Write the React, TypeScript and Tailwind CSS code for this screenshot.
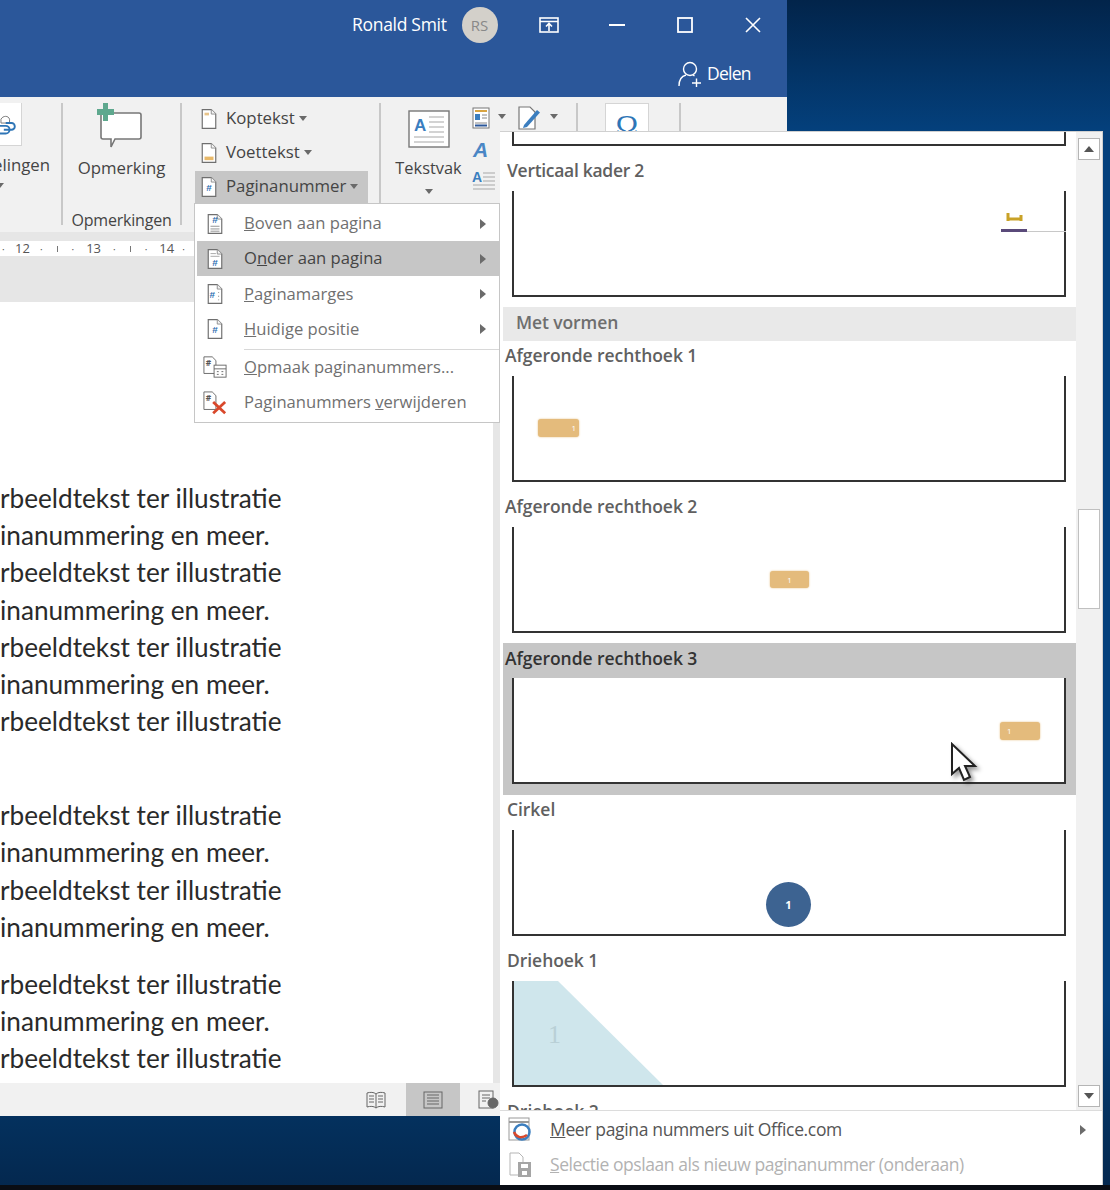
import React from "react";

const ui = "font-['Open_Sans','Noto_Sans',sans-serif]";

function PageIcon({ kind }: { kind: "top" | "bottom" | "side" | "current" | "head" | "foot" | "num" }) {
  return (
    <svg width="18" height="22" viewBox="0 0 20 24" className="shrink-0">
      <path d="M2.5 1.5h10l5 5v16h-15z" fill="#fff" stroke="#6f6f6f" strokeWidth="1.3" />
      <path d="M12.5 1.5v5h5" fill="#f3f3f3" stroke="#8a8a8a" strokeWidth="1" />
      {kind === "head" && <path d="M5 5h5v3H5z" fill="#e8c48a" />}
      {kind === "foot" && <path d="M5 16h10v4H5z" fill="#e8b96a" />}
      {(kind === "top" || kind === "bottom" || kind === "side" || kind === "current" || kind === "num") && (
        <text
          x={kind === "side" ? 7 : 10}
          y={kind === "top" ? 11 : kind === "bottom" ? 20 : 16}
          textAnchor="middle"
          fontSize="11"
          fontWeight="700"
          fill="#2b6cb0"
          fontFamily="Liberation Sans, sans-serif"
        >
          #
        </text>
      )}
      {kind === "top" && <path d="M5 14.500h10M5 17.500h10M5 20h10" stroke="#8a8a8a" strokeWidth="1" />}
      {kind === "bottom" && <path d="M5 6h6M5 9h10" stroke="#a0a0a0" strokeWidth="1" />}
      {kind === "side" && <path d="M14 10v1M14 14v1M14 18v1" stroke="#8a8a8a" strokeWidth="1.2" />}
    </svg>
  );
}

function Caret({ className = "" }: { className?: string }) {
  return (
    <svg width="8" height="5" viewBox="0 0 8 5" className={className}>
      <path d="M0 0h8L4 5z" fill="#6a6a6a" />
    </svg>
  );
}

function ArrowRight() {
  return (
    <svg width="6" height="10" viewBox="0 0 6 10" className="shrink-0">
      <path d="M0 0l6 5-6 5z" fill="#6b6b6b" />
    </svg>
  );
}

function Sep({ h = "h-[122px]" }: { h?: string }) {
  return <div className={`w-[2px] bg-[#c8c8c8] shrink-0 ${h}`} />;
}

function SmallRow({ kind, label, active }: { kind: "head" | "foot" | "num"; label: string; active?: boolean }) {
  return (
    <div className={`flex items-center h-[34px] w-[173px] pl-[5px] pb-[3px] ${active ? "bg-[#c6c6c6]" : ""}`}>
      <PageIcon kind={kind} />
      <span className="ml-[8px] text-[16.8px] text-[#444] leading-none">{label}</span>
      <Caret className="ml-[4px]" />
    </div>
  );
}

function MenuRow({ icon, children, hl, arrow = true }: { icon: React.ReactNode; children: React.ReactNode; hl?: boolean; arrow?: boolean }) {
  return (
    <div className={`flex items-center h-[35.2px] ${hl ? "bg-[#c6c6c6] text-[#444]" : "text-[#707070]"}`}>
      <div className="w-[47px] flex justify-center shrink-0 pr-[11px]">{icon}</div>
      <span className="text-[16.6px] leading-none whitespace-nowrap">{children}</span>
      {arrow && (
        <div className="ml-auto pr-[13px]">
          <ArrowRight />
        </div>
      )}
    </div>
  );
}

function Frame({ children }: { children?: React.ReactNode }) {
  return (
    <div className="relative ml-[9px] w-[554px] h-[106px] border-l-2 border-r-2 border-b-2 border-[#333] bg-white">
      {children}
    </div>
  );
}

const labelCls = "font-semibold leading-none text-[17.5px] whitespace-nowrap";

function Item({ label, hl, children, pl = "pl-[2px]" }: { label: string; hl?: boolean; children?: React.ReactNode; pl?: string }) {
  return (
    <div className={`h-[151.2px] w-[573px] shrink-0 ${hl ? "bg-[#c6c6c6]" : ""}`}>
      <div className={`h-[35px] flex items-center pb-[5px] tracking-[-0.05px] ${pl} ${labelCls} ${hl ? "text-[#333]" : "text-[#606060]"}`}>
        {label}
      </div>
      <Frame>{children}</Frame>
    </div>
  );
}

const docLines = ["rbeeldtekst ter illustratie", "inanummering en meer."];

function DocLine({ i }: { i: number }) {
  return <div className="h-[37.2px] flex items-center text-[26.2px] text-[#2a2a2a] whitespace-nowrap font-['Lato',sans-serif] leading-none">{docLines[i % 2]}</div>;
}

export default function App() {
  return (
    <div className={`relative w-[1110px] h-[1190px] overflow-hidden bg-[linear-gradient(180deg,#02244a_0px,#04407c_131px,#04407c_1000px,#04315e_1116px,#04284f_1185px)] ${ui}`}>
      <div className="absolute left-0 bottom-0 w-full h-[5px] bg-[#0a0d14]" />
      {/* Word window */}
      <div className="absolute left-0 top-0 w-[787px] h-[1116px] flex flex-col bg-white">
        {/* title */}
        <div className="h-[97px] bg-[#2b579a] shrink-0 flex flex-col text-white">
          <div className="h-[50px] flex items-center">
            <span className="ml-[352px] text-[17.5px] tracking-[-0.3px] leading-none">Ronald Smit</span>
            <div className="ml-[15px] w-[36px] h-[36px] rounded-full bg-[#d3d0ca] text-[#888] flex items-center justify-center text-[15px]">RS</div>
            <svg width="20" height="16" viewBox="0 0 20 16" className="ml-[41px]" fill="none" stroke="#fff" strokeWidth="1.6">
              <rect x="1" y="1" width="18" height="14" />
              <path d="M1 4.500h18M10 14V7M7 9.500l3-3 3 3" />
            </svg>
            <svg width="16" height="2" viewBox="0 0 16 2" className="ml-[50px]">
              <rect width="16" height="2" fill="#fff" />
            </svg>
            <svg width="16" height="16" viewBox="0 0 16 16" className="ml-[52px]" fill="none" stroke="#fff" strokeWidth="1.8">
              <rect x="1" y="1" width="14" height="14" />
            </svg>
            <svg width="16" height="16" viewBox="0 0 16 16" className="ml-[52px]" fill="none" stroke="#fff" strokeWidth="1.6">
              <path d="M1 1l14 14M15 1L1 15" />
            </svg>
          </div>
          <div className="h-[47px] flex items-center">
            <svg width="24" height="26" viewBox="0 0 24 26" className="ml-[678px]" fill="none" stroke="#fff" strokeWidth="1.4">
              <circle cx="12" cy="8" r="6.500" />
              <path d="M1 25c0-6 3-10 7-11M15 14l1.500 1M14 22h9M18.500 17.500v9" />
            </svg>
            <span className="ml-[5px] text-[17.5px] tracking-[-0.75px] leading-none">Delen</span>
          </div>
        </div>
        {/* ribbon */}
        <div className="h-[135px] bg-[#f1f1f1] shrink-0 flex pt-[6px] items-start text-[#444]">
          <div className="w-[61px] shrink-0 flex flex-col">
            <div className="w-[22px] h-[43px] bg-white border-r border-b border-[#d5d5d5] flex items-center overflow-hidden">
              <svg width="22" height="28" viewBox="0 0 22 28" fill="none">
                <path d="M1 9c2-4 8-4 9 0v4H1z" stroke="#777" strokeWidth="1" />
                <path d="M-2 18h8a4 4 0 0 1 0 8h-6M4 22h8a3.500 3.500 0 0 0 0-7H6" stroke="#2e75b6" strokeWidth="2" transform="translate(0 -2)" />
              </svg>
            </div>
            <div className="text-[16.8px] leading-none mt-[11px] whitespace-nowrap w-[50px] flex justify-end">elingen</div>
            <Caret className="mt-[9px] -ml-[4px]" />
          </div>
          <Sep />
          <div className="w-[117px] shrink-0 flex flex-col items-center">
            <svg width="48" height="46" viewBox="0 0 48 46" className="-ml-[2px] shrink-0" fill="none">
              <path d="M4 10h38a2 2 0 0 1 2 2v22a2 2 0 0 1-2 2H18l-4 8v-8H6a2 2 0 0 1-2-2z" fill="#fff" stroke="#777" strokeWidth="1.6" />
              <path d="M6 0h5v6h6v6h-6v6H6v-6H0V6h6z" fill="#5ea88e" />
            </svg>
            <div className="text-[16.8px] leading-none mt-[11px]">Opmerking</div>
            <div className="text-[16px] leading-none mt-[35px] whitespace-nowrap tracking-[-0.2px]">Opmerkingen</div>
          </div>
          <Sep />
          <div className="w-[197px] shrink-0 pl-[13px] flex flex-col">
            <SmallRow kind="head" label="Koptekst" />
            <SmallRow kind="foot" label="Voettekst" />
            <SmallRow kind="num" label="Paginanummer" active />
          </div>
          <Sep h="h-[100px]" />
          <div className="w-[91px] shrink-0 flex flex-col items-center pt-[7px] pl-[4px]">
            <svg width="42" height="38" viewBox="0 0 42 38" fill="none">
              <rect x="1" y="1" width="40" height="36" fill="#fff" stroke="#777" strokeWidth="1.4" />
              <text x="6" y="21" fontSize="17" fontWeight="700" fill="#3b7ebf" fontFamily="Liberation Sans, sans-serif">A</text>
              <path d="M21 7h15M21 12h15M21 17h15M21 22h15M6 27h30M6 32h30" stroke="#a8a8a8" strokeWidth="1.2" />
            </svg>
            <div className="text-[16.4px] leading-none mt-[12px]">Tekstvak</div>
            <Caret className="mt-[13px]" />
          </div>
          <div className="w-[30px] shrink-0 flex flex-col items-start pt-[4px] gap-[9px]">
            <svg width="18" height="22" viewBox="0 0 18 22" fill="none">
              <rect x="1" y="1" width="16" height="20" fill="#fff" stroke="#777" />
              <path d="M3 4h12" stroke="#d9a441" strokeWidth="2" />
              <rect x="3" y="7" width="5" height="6" fill="#3b7ebf" />
              <path d="M10 8h5M10 11h5M3 16h12" stroke="#888" />
              <path d="M3 18.500h12" stroke="#2b579a" strokeWidth="2" />
            </svg>
            <svg width="18" height="22" viewBox="0 0 18 22">
              <text x="1" y="19" fontSize="21" fontWeight="700" fontStyle="italic" fill="#4a86c5" fontFamily="Liberation Sans, sans-serif">A</text>
            </svg>
            <svg width="24" height="24" viewBox="0 0 24 24" fill="none">
              <text x="0" y="13" fontSize="14" fontWeight="700" fill="#3b7ebf" fontFamily="Liberation Sans, sans-serif">A</text>
              <path d="M11 4h12M11 8h12M11 12h12M1 16h22M1 20h22" stroke="#a8a8a8" strokeWidth="1.200" />
            </svg>
          </div>
          <Caret className="mt-[11px] -ml-[4px]" />
          <div className="ml-[12px] w-[22px] pt-[3px]">
            <svg width="26" height="24" viewBox="0 0 26 24" fill="none">
              <path d="M1 1h11l5 5v17H1z" fill="#fff" stroke="#777" strokeWidth="1.2" />
              <path d="M6 19L19 4l3 2.500L9 21l-4 1z" fill="#3b7ebf" />
            </svg>
          </div>
          <Caret className="mt-[11px] ml-[10px]" />
          <div className="ml-[18px]">
            <Sep h="h-[40px]" />
          </div>
          <div className="ml-[27px] w-[44px] h-[40px] bg-white border border-[#d5d5d5] flex justify-center pt-[6px] text-[30px] leading-none text-[#2e75b6] font-['Liberation_Serif',serif]">Ω</div>
          <div className="ml-[30px]">
            <Sep h="h-[40px]" />
          </div>
        </div>
        {/* ruler */}
        <div className="h-[9px] bg-[#e6e6e6] shrink-0" />
        <div className="h-[15px] bg-white shrink-0 flex items-center text-[13px] text-[#555] leading-none whitespace-nowrap">
          <span className="w-[8px] ml-[2px] text-[10px]">·</span>
          <span className="ml-[5px]">12</span>
          <span className="ml-[10px] text-[10px]">·</span>
          <span className="ml-[14px] w-[1px] h-[6px] bg-[#777]" />
          <span className="ml-[14px] text-[10px]">·</span>
          <span className="ml-[12px]">13</span>
          <span className="ml-[12px] text-[10px]">·</span>
          <span className="ml-[14px] w-[1px] h-[6px] bg-[#777]" />
          <span className="ml-[14px] text-[10px]">·</span>
          <span className="ml-[12px]">14</span>
          <span className="ml-[8px] text-[10px]">·</span>
        </div>
        <div className="h-[46px] bg-[#e6e6e6] shrink-0" />
        {/* doc */}
        <div className="flex-1 flex min-h-0">
          <div className="w-[493px] bg-white pt-[177.500px]">
            {[0, 1, 0, 1, 0, 1, 0].map((v, i) => <DocLine key={i} i={v} />)}
            <div className="h-[57px]" />
            {[0, 1, 0, 1].map((v, i) => <DocLine key={i} i={v} />)}
            <div className="h-[20px]" />
            {[0, 1, 0].map((v, i) => <DocLine key={i} i={v} />)}
          </div>
          <div className="flex-1 bg-[#e6e6e6]" />
        </div>
        {/* status */}
        <div className="h-[33px] bg-[#f1f1f1] shrink-0 flex items-center">
          <svg width="20" height="18" viewBox="0 0 20 18" className="ml-[366px]" fill="none" stroke="#666">
            <path d="M10 3C8 1 4 1 1 2v14c3-1 7-1 9 1 2-2 6-2 9-1V2c-3-1-7-1-9 1zM10 3v14M3 5h5M3 8h5M3 11h5M12 5h5M12 8h5M12 11h5" />
          </svg>
          <div className="ml-[20px] w-[54px] h-[33px] bg-[#c6c6c6] flex items-center justify-center">
            <svg width="20" height="18" viewBox="0 0 20 18" fill="none" stroke="#666">
              <rect x="1" y="1" width="18" height="16" />
              <path d="M4 4h12M4 7h12M4 10h12M4 13h12" />
            </svg>
          </div>
          <svg width="22" height="20" viewBox="0 0 22 20" className="ml-[18px]" fill="none" stroke="#666">
            <rect x="1" y="1" width="14" height="17" />
            <path d="M4 5h8M4 8h8M4 11h4" />
            <circle cx="15" cy="13" r="5" fill="#666" />
          </svg>
        </div>
      </div>

      {/* Paginanummer dropdown */}
      <div className="absolute left-[194px] top-[203px] w-[306px] h-[220px] bg-white border border-[#c6c6c6] pt-[2px] pl-[2px]">
        <MenuRow icon={<PageIcon kind="top" />}><u>B</u>oven aan pagina</MenuRow>
        <MenuRow hl icon={<PageIcon kind="bottom" />}>O<u>n</u>der aan pagina</MenuRow>
        <MenuRow icon={<PageIcon kind="side" />}><u>P</u>aginamarges</MenuRow>
        <MenuRow icon={<PageIcon kind="current" />}><u>H</u>uidige positie</MenuRow>
        <div className="ml-[47px] h-[3px] border-b border-[#d8d8d8]" />
        <MenuRow arrow={false} icon={
          <svg width="24" height="24" viewBox="0 0 26 24" fill="none" stroke="#666">
            <path d="M1 1h9l4 4v14H1z" fill="#fff" />
            <text x="3" y="11" fontSize="9" fontWeight="700" fill="#555" stroke="none">#</text>
            <rect x="12" y="10" width="13" height="13" fill="#fff" />
            <path d="M12 14h13M15 17h2M20 17h2M15 20h2M20 20h2" />
          </svg>
        }><u>O</u>pmaak paginanummers...</MenuRow>
        <MenuRow arrow={false} icon={
          <svg width="24" height="26" viewBox="0 0 26 26" fill="none" stroke="#666">
            <path d="M1 1h9l4 4v15H1z" fill="#fff" />
            <text x="3" y="11" fontSize="9" fontWeight="700" fill="#555" stroke="none">#</text>
            <path d="M11 12l13 12M24 12L11 24" stroke="#d9482b" strokeWidth="3" />
          </svg>
        }>Paginanummers <u>v</u>erwijderen</MenuRow>
      </div>

      {/* Gallery */}
      <div className="absolute left-[500px] top-[131px] w-[603px] h-[1054px] bg-white flex flex-col border-t border-r border-[#d0d0d0]">
        <div className="flex h-[978px] shrink-0">
          <div className="w-[576px] overflow-hidden pl-[3px] flex flex-col">
            <div className="h-[23px] shrink-0">
              <div className="ml-[9px] w-[554px] h-[14px] border-l-2 border-r-2 border-b-2 border-[#333]" />
            </div>
            <div className="h-[152px] shrink-0">
              <div className={`h-[36px] flex items-center pl-[4px] pb-[5px] tracking-[-0.3px] text-[#606060] ${labelCls}`}>Verticaal kader 2</div>
              <Frame>
                <div className="absolute left-[487px] top-[38px] w-[26px] h-[3px] bg-[#5a4a7a]" />
                <div className="absolute left-[513px] top-[40px] w-[39px] h-[1px] bg-[#c8c8c8]" />
                <svg width="18" height="12" viewBox="0 0 18 12" className="absolute left-[492px] top-[20px]" fill="none">
                  <path d="M2 2v8M2 8h14M15 4v6" stroke="#c9a227" strokeWidth="3" />
                </svg>
              </Frame>
            </div>
            <div className="h-[34px] shrink-0 bg-[#e9e9e9] flex items-center pl-[13px] pb-[2px] text-[17.5px] font-semibold text-[#6e6e6e] tracking-[-0.1px] leading-none">Met vormen</div>
            <div className="flex flex-col">
              <Item label="Afgeronde rechthoek 1">
                <div className="absolute left-[24px] top-[43px] w-[41px] h-[18px] rounded-[3px] bg-[#e4bb7c] shadow-[0_0_2px_#e4bb7c] flex items-center justify-end pr-[3px] text-[8px] leading-none text-white">1</div>
              </Item>
              <Item label="Afgeronde rechthoek 2">
                <div className="absolute left-[256px] top-[44px] w-[39px] h-[17px] rounded-[3px] bg-[#e4bb7c] shadow-[0_0_2px_#e4bb7c] flex items-center justify-center text-[8px] leading-none text-white">1</div>
              </Item>
              <Item label="Afgeronde rechthoek 3" hl>
                <div className="absolute left-[486px] top-[44px] w-[40px] h-[18px] rounded-[3px] bg-[#e4bb7c] shadow-[0_0_2px_#e4bb7c] flex items-center pl-[7px] text-[8px] leading-none text-white">1</div>
              </Item>
              <Item label="Cirkel" pl="pl-[4px]">
                <div className="absolute left-[252px] top-[52px] w-[45px] h-[45px] rounded-full bg-[#3d6391] flex items-center justify-center text-[11px] font-bold leading-none text-white">1</div>
              </Item>
              <Item label="Driehoek 1" pl="pl-[4px]">
                <svg width="150" height="104" viewBox="0 0 150 104" className="block">
                  <path d="M0 0h44l105 104H0z" fill="#cfe6ec" />
                  <text x="34" y="62" fontSize="26" fill="#b9d0d6" fontFamily="Liberation Serif, serif">1</text>
                </svg>
              </Item>
              <div className={`h-[35px] flex items-center pb-[5px] pl-[4px] text-[#606060] ${labelCls}`}>Driehoek 2</div>
            </div>
          </div>
          {/* scrollbar */}
          <div className="w-[26px] bg-[#f1f1f1] flex flex-col items-center pt-[6px]">
            <div className="w-[22px] h-[22px] bg-white border border-[#b5b5b5] flex items-center justify-center">
              <svg width="10" height="6" viewBox="0 0 10 6"><path d="M5 0l5 6H0z" fill="#555" /></svg>
            </div>
            <div className="mt-[349px] w-[22px] h-[100px] bg-white border border-[#c0c0c0]" />
            <div className="mt-[476px] w-[22px] h-[22px] bg-white border border-[#b5b5b5] flex items-center justify-center">
              <svg width="10" height="6" viewBox="0 0 10 6"><path d="M5 6L0 0h10z" fill="#555" /></svg>
            </div>
          </div>
        </div>
        <div className="flex-1 border-t border-[#dcdcdc] bg-white pt-[1px]">
          <div className="h-[35px] flex items-center text-[#555]">
            <div className="w-[50px] flex justify-center shrink-0 pr-[10px]">
              <svg width="24" height="26" viewBox="0 0 24 26" fill="none">
                <rect x="1" y="1" width="20" height="22" fill="#fff" stroke="#999" />
                <path d="M1 5h20" stroke="#999" strokeWidth="2" />
                <circle cx="14" cy="15" r="7.500" stroke="#3b7ebf" strokeWidth="2.500" />
                <path d="M6 15c2 5 7 7 13 3" stroke="#d9482b" strokeWidth="2.500" />
              </svg>
            </div>
            <span className="text-[17.500px] leading-none tracking-[-0.35px] whitespace-nowrap"><u>M</u>eer pagina nummers uit Office.com</span>
            <div className="ml-auto pr-[16px]"><ArrowRight /></div>
          </div>
          <div className="h-[36px] flex items-center text-[#b2b2b2]">
            <div className="w-[50px] flex justify-center shrink-0 pr-[10px]">
              <svg width="24" height="26" viewBox="0 0 24 26" fill="none">
                <path d="M2 1h9l4 4v18H2z" fill="#fff" stroke="#b5b5b5" />
                <rect x="10" y="10" width="13" height="15" fill="#a5a5a5" />
                <rect x="13" y="12" width="7" height="4" fill="#fff" />
                <rect x="14" y="19" width="5" height="4" fill="#fff" />
              </svg>
            </div>
            <span className="text-[17.500px] leading-none tracking-[-0.45px] whitespace-nowrap"><u>S</u>electie opslaan als nieuw paginanummer (onderaan)</span>
          </div>
        </div>
      </div>

      {/* Mouse pointer */}
      <svg width="30" height="44" viewBox="0 0 30 44" className="absolute left-[950px] top-[742px] drop-shadow-[3px_3px_2px_rgba(0,0,0,0.4)]">
        <path d="M2 2v30l7-6 5 12 6-3-5-11h10z" fill="#fff" stroke="#222" strokeWidth="2" />
      </svg>
    </div>
  );
}
